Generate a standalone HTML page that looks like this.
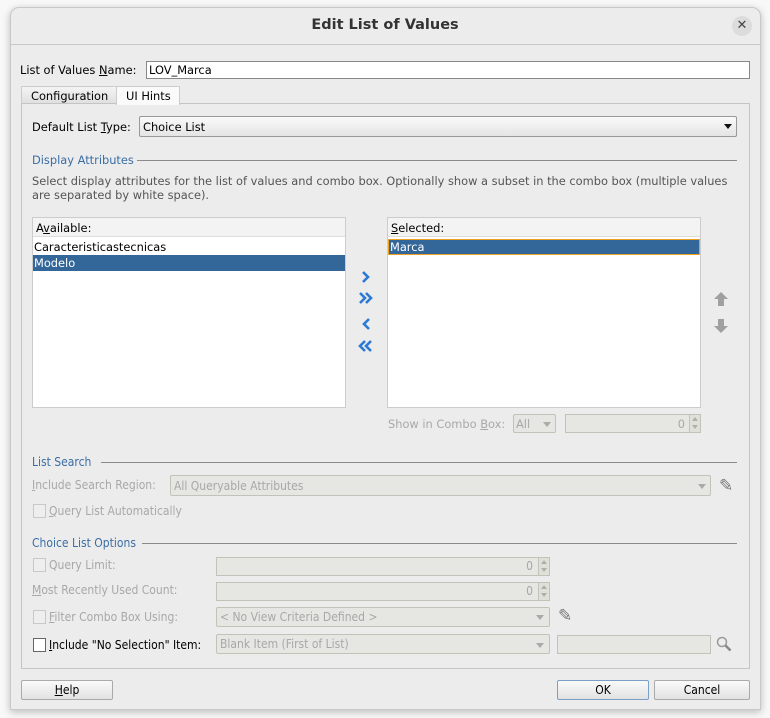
<!DOCTYPE html>
<html><head><style>
*{box-sizing:border-box;margin:0;padding:0}
body{width:770px;height:718px;background:#f8f8f8;font-family:"DejaVu Sans","Liberation Sans",sans-serif;font-size:11.4px;color:#000;position:relative;overflow:hidden}
.a{position:absolute;white-space:nowrap}
.win{position:absolute;left:10px;top:7px;width:751px;height:703px;background:#ececec;border:1px solid #c8c8c8;border-radius:9px 9px 0 0;box-shadow:0 2px 8px rgba(0,0,0,.25)}
.hdr{color:#3a6ea5}
.line{position:absolute;height:1px;background:#8a8a8a}
.dis{color:#a8a8a8}
.cond{font-stretch:condensed;font-family:"DejaVu Sans Condensed","DejaVu Sans",sans-serif}
.fld{position:absolute;background:#e6e6e2;border:1px solid #c2c2b8}
.cb{position:absolute;width:13px;height:14px;border:1px solid #c8c8c8;background:#eee}
.btn{position:absolute;height:20px;border:1px solid #aaa;border-radius:2px;background:linear-gradient(#fafafa,#e2e2e2);text-align:center;line-height:18px;font-stretch:condensed;font-family:"DejaVu Sans Condensed","DejaVu Sans",sans-serif;font-size:12px}
.tri{position:absolute;width:0;height:0;border-left:4px solid transparent;border-right:4px solid transparent;border-top:5px solid #aaa}
.spin{position:absolute;width:11px;height:17px;border-left:1px solid #c2c2b8;background:#e0e0da}
.spin:before{content:"";position:absolute;left:2px;top:2px;border-left:3px solid transparent;border-right:3px solid transparent;border-bottom:4px solid #b0b0a8}
.spin:after{content:"";position:absolute;left:2px;top:10px;border-left:3px solid transparent;border-right:3px solid transparent;border-top:4px solid #b0b0a8}
u{text-decoration:underline}
</style></head><body>
<div class="win"></div>
<div class="a" style="left:0;top:17px;width:770px;text-align:center;font-weight:bold;font-size:14.5px;color:#333">Edit List of Values</div>
<div class="a" style="left:732px;top:16px;width:20px;height:20px;border-radius:50%;background:#dcdcdc;text-align:center;line-height:19px;font-size:13px;color:#444">✕</div>
<div class="a" style="left:11px;top:44px;width:749px;height:1px;background:#c8c8c8"></div>

<div class="a" style="left:20px;top:63px">List of Values <u>N</u>ame:</div>
<div class="a" style="left:146px;top:61px;width:604px;height:18px;background:#fff;border:1px solid #888;padding:1px 2px">LOV_Marca</div>

<div class="a" style="left:21px;top:86px;width:96px;height:18px;border:1px solid #ccc;background:linear-gradient(#f4f4f4,#e0e0e0);padding:2px 9px">Configuration</div>
<div class="a" style="left:116px;top:86px;width:64px;height:19px;border:1px solid #ccc;border-bottom:none;background:#fafafa;padding:2px 9px;z-index:2">UI Hints</div>
<div class="a" style="left:21px;top:103px;width:729px;height:566px;border:1px solid #c4c4c4"></div>

<div class="a" style="left:32px;top:120px">Default List <u>T</u>ype:</div>
<div class="a" style="left:139px;top:116px;width:598px;height:21px;border:1px solid #999;border-radius:2px;background:linear-gradient(#fafafa,#e4e4e4);padding:3px 3px">Choice List</div>
<div class="tri" style="left:724px;top:124px;border-top-color:#111"></div>

<div class="a hdr" style="left:32px;top:153px">Display Attributes</div>
<div class="line" style="left:137px;top:160px;width:600px"></div>
<div class="a" style="left:32px;top:174px;color:#555">Select display attributes for the list of values and combo box. Optionally show a subset in the combo box (multiple values</div>
<div class="a" style="left:32px;top:188px;color:#555">are separated by white space).</div>

<div class="a" style="left:32px;top:217px;width:314px;height:191px;border:1px solid #ccc;background:#fff"></div>
<div class="a" style="left:33px;top:218px;width:312px;height:19px;background:#f3f3f3;border-bottom:1px solid #ddd;padding:3px 3px">A<u>v</u>ailable:</div>
<div class="a" style="left:34px;top:240px">Caracteristicastecnicas</div>
<div class="a" style="left:33px;top:255px;width:312px;height:16px;background:#336699;color:#fff;padding:1px 1px">Modelo</div>

<div class="a" style="left:387px;top:217px;width:314px;height:191px;border:1px solid #ccc;background:#fff"></div>
<div class="a" style="left:388px;top:218px;width:312px;height:19px;background:#f3f3f3;border-bottom:1px solid #ddd;padding:3px 3px"><u>S</u>elected:</div>
<div class="a" style="left:388px;top:239px;width:312px;height:16px;background:#336699;color:#fff;border:1px solid #f0a020;padding:0 1px">Marca</div>

<svg class="a" style="left:356px;top:268px" width="22" height="90" viewBox="0 0 22 90">
<g fill="none" stroke="#2a7ad6" stroke-width="2.6" stroke-linejoin="miter">
<path d="M7 4l5 5-5 5"/>
<path d="M4 25l5 5-5 5M10 25l5 5-5 5"/>
<path d="M13 51l-5 5 5 5"/>
<path d="M9 73l-5 5 5 5M15 73l-5 5 5 5"/>
</g></svg>
<svg class="a" style="left:713px;top:291px" width="16" height="44" viewBox="0 0 16 44">
<path d="M8 1l7 7h-4v7h-6v-7h-4z" fill="#a0a0a0"/>
<path d="M5 28h6v7h4l-7 7-7-7h4z" fill="#a0a0a0"/>
</svg>

<div class="a dis" style="left:388px;top:417px">Show in Combo <u>B</u>ox:</div>
<div class="fld" style="left:513px;top:414px;width:43px;height:19px;border-radius:2px;padding:2px 2px;color:#a8a8a8">All</div>
<div class="tri" style="left:543px;top:422px"></div>
<div class="fld" style="left:565px;top:414px;width:136px;height:19px;text-align:right;padding:2px 15px"><span class="dis">0</span><div class="spin" style="right:0;top:0"></div></div>

<div class="a hdr cond" style="left:32px;top:455px;font-size:12px">List Search</div>
<div class="line" style="left:101px;top:462px;width:636px"></div>
<div class="a dis cond" style="left:32px;top:478px;font-size:12px"><u>I</u>nclude Search Region:</div>
<div class="fld" style="left:170px;top:475px;width:541px;height:21px;border-radius:2px;padding:3px 3px;color:#a8a8a8"><span class="cond" style="font-size:12px">All Queryable Attributes</span></div>
<div class="tri" style="left:698px;top:484px"></div>
<div class="a" style="left:719px;top:476px;font-size:17px;color:#777">✎</div>
<div class="cb" style="left:33px;top:504px"></div>
<div class="a dis cond" style="left:49px;top:504px;font-size:12px"><u>Q</u>uery List Automatically</div>

<div class="a hdr cond" style="left:32px;top:536px;font-size:12px">Choice List Options</div>
<div class="line" style="left:142px;top:543px;width:595px"></div>

<div class="cb" style="left:33px;top:558px"></div>
<div class="a dis cond" style="left:49px;top:558px;font-size:12px">Query Limit:</div>
<div class="fld" style="left:216px;top:557px;width:334px;height:19px;text-align:right;padding:1px 16px"><span class="dis cond" style="font-size:12px">0</span><div class="spin" style="right:0;top:0"></div></div>
<div class="a dis cond" style="left:32px;top:583px;font-size:12px"><u>M</u>ost Recently Used Count:</div>
<div class="fld" style="left:216px;top:582px;width:334px;height:19px;text-align:right;padding:1px 16px"><span class="dis cond" style="font-size:12px">0</span><div class="spin" style="right:0;top:0"></div></div>
<div class="cb" style="left:33px;top:610px"></div>
<div class="a dis cond" style="left:49px;top:610px;font-size:12px"><u>F</u>ilter Combo Box Using:</div>
<div class="fld" style="left:216px;top:607px;width:334px;height:20px;border-radius:2px;padding:2px 3px"><span class="dis cond" style="font-size:12px">&lt; No View Criteria Defined &gt;</span></div>
<div class="tri" style="left:536px;top:615px"></div>
<div class="a" style="left:558px;top:606px;font-size:17px;color:#777">✎</div>
<div class="cb" style="left:33px;top:638px;border-color:#666;background:#fff"></div>
<div class="a cond" style="left:49px;top:638px;font-size:12px"><u>I</u>nclude "No Selection" Item:</div>
<div class="fld" style="left:216px;top:634px;width:334px;height:20px;border-radius:2px;padding:2px 3px"><span class="dis cond" style="font-size:12px">Blank Item (First of List)</span></div>
<div class="tri" style="left:536px;top:643px"></div>
<div class="fld" style="left:557px;top:635px;width:154px;height:19px"></div>
<svg class="a" style="left:716px;top:636px" width="16" height="16" viewBox="0 0 16 16"><circle cx="6" cy="6" r="4.5" fill="#eee" stroke="#999" stroke-width="1.5"/><path d="M9.5 9.5l5 5" stroke="#888" stroke-width="2.5"/></svg>

<div class="btn" style="left:21px;top:680px;width:92px"><u>H</u>elp</div>
<div class="btn" style="left:557px;top:680px;width:92px;border-color:#7aa0c8">OK</div>
<div class="btn" style="left:654px;top:680px;width:96px">Cancel</div>
</body></html>
